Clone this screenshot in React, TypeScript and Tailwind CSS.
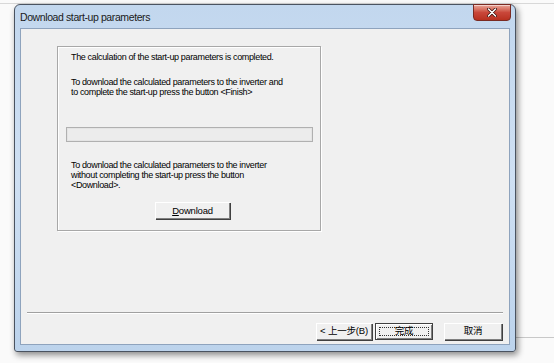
import React from 'react';

const ui = "font-['Liberation_Sans','Noto_Sans_CJK_SC',sans-serif]";

const WinButton: React.FC<{ children: React.ReactNode; width: string; isDefault?: boolean }> = ({ children, width, isDefault }) => (
  <div
    className={`${width} h-[17px] flex items-center justify-center bg-[#f0f0f0] text-[9.5px] tracking-[-0.2px] text-black ${
      isDefault
        ? 'border border-[#404040] shadow-[inset_1px_1px_0_#ffffff,inset_-1px_-1px_0_#808080]'
        : 'shadow-[inset_1px_1px_0_#ffffff,inset_-1px_-1px_0_#808080,1px_1px_0_#404040]'
    }`}
  >
    {isDefault ? (
      <div className="w-[calc(100%-6px)] h-[calc(100%-6px)] border border-dotted border-[#333] flex items-center justify-center">
        {children}
      </div>
    ) : (
      children
    )}
  </div>
);

export default function App() {
  return (
    <div className={`relative w-[554px] h-[363px] bg-[#fafafa] overflow-hidden ${ui}`}>
      {/* desktop lines behind the dialog */}
      <div className="absolute left-0 right-0 top-[3px] h-px bg-[#d8d8d8]" />
      <div className="absolute left-[500px] right-0 top-[337px] h-px bg-[#c8c8c8]" />

      {/* dialog window */}
      <div className="absolute left-[14px] top-[4px] w-[502px] h-[348px] rounded-t-[6px] rounded-b-[3px] border border-[#4a5360] bg-gradient-to-b from-[#c2d7ee] via-[#cfe0f3] to-[#bcd3ec] shadow-[2px_3px_6px_rgba(0,0,0,0.45)] flex flex-col">
        {/* title bar */}
        <div className="relative h-[23px] shrink-0 flex items-center pl-[5px]">
          <span className="text-[10.5px] tracking-[-0.4px] text-[#1a1a1a] leading-none pt-[1px]">Download start-up parameters</span>
          <div className="absolute right-[4px] top-[-1px] w-[38px] h-[17px] rounded-b-[4px] border border-[#7a2a22] bg-gradient-to-b from-[#e8a598] via-[#c9473a] to-[#b8301f] flex items-center justify-center shadow-[inset_0_1px_0_rgba(255,255,255,0.5)]">
            <svg width="10" height="9" viewBox="0 0 10 9">
              <path d="M1.5 1 L8.5 8 M8.5 1 L1.5 8" stroke="#3a0d08" strokeWidth="3" strokeLinecap="round" />
              <path d="M1.5 1 L8.5 8 M8.5 1 L1.5 8" stroke="#ffffff" strokeWidth="1.6" strokeLinecap="round" />
            </svg>
          </div>
        </div>

        {/* client area */}
        <div className="mx-[5px] mb-[6px] flex-1 border border-[#8ea3bd] bg-[#f0f0f0] flex flex-col">
          <div className="pl-[36px] pt-[17px]">
            {/* group box */}
            <div className="w-[264px] h-[185px] border border-[#a8a8a8] shadow-[inset_1px_1px_0_#ffffff,1px_1px_0_#ffffff] flex flex-col text-[9px] leading-[10px] tracking-[-0.35px] text-black">
              <p className="ml-[13px] mt-[5px]">The calculation of the start-up parameters is completed.</p>
              <p className="ml-[13px] mt-[15px]">
                To download the calculated parameters to the inverter and
                <br />
                to complete the start-up press the button &lt;Finish&gt;
              </p>
              <div className="ml-[8px] mt-[30px] w-[247px] h-[15px] border border-[#b0b0b0] bg-[#ececec] shadow-[inset_0_0_0_1px_#e4e4e4]" />
              <p className="ml-[13px] mt-[18px]">
                To download the calculated parameters to the inverter
                <br />
                without completing the start-up press the button
                <br />
                &lt;Download&gt;.
              </p>
              <div className="ml-[97px] mt-[12px]">
                <WinButton width="w-[75px]">
                  <span>
                    <span className="underline">D</span>ownload
                  </span>
                </WinButton>
              </div>
            </div>
          </div>

          {/* separator */}
          <div className="mt-auto mx-[6px] h-[2px] border-t border-[#a0a0a0] border-b border-b-white" />

          <div className="flex justify-end gap-[3px] pr-[7px] pt-[9px] pb-[4px]">
            <WinButton width="w-[56px]">&lt; 上一步(B)</WinButton>
            <WinButton width="w-[58px]" isDefault>完成</WinButton>
            <div className="w-[5px]" />
            <WinButton width="w-[58px]">取消</WinButton>
          </div>
        </div>
      </div>
    </div>
  );
}
